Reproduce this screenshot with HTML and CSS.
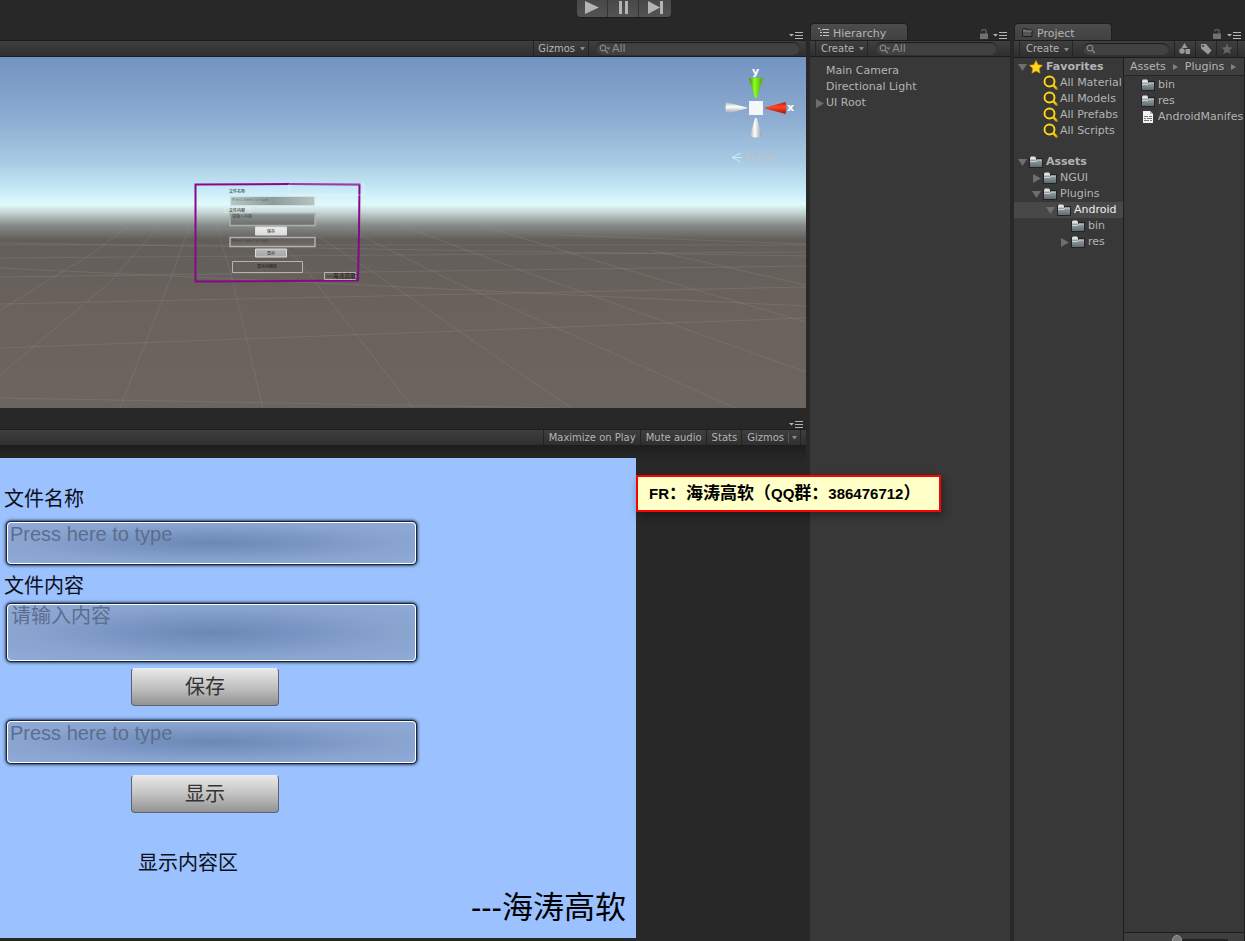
FILE: index.html
```html
<!DOCTYPE html>
<html lang="zh-CN">
<head>
<meta charset="utf-8">
<title>Unity Editor</title>
<link rel="stylesheet" href="styles.css">
</head>
<body>
<svg class="defs" aria-hidden="true">
  <defs>
    <linearGradient id="folderFill" x1="0" y1="0" x2="0" y2="1"><stop offset="0" stop-color="#9aa8a9"/><stop offset="1" stop-color="#5d6b6d"/></linearGradient>
    <symbol id="folder" viewBox="0 0 14 12"><path d="M0 1h6l1 1h7v10H0z" fill="#222"/><path d="M1 1.500 2 .5h4l1 1.500V4H1z" fill="#e2e2e2"/><path d="M1 3.500h12V11H1z" fill="url(#folderFill)"/><path d="M1 5.500h6l1-1.500h5" stroke="#c8d2d2" fill="none"/></symbol>
    <symbol id="magnifier" viewBox="0 0 15 16"><path d="m10 10 3.500 3.500" stroke="#c79900" stroke-width="2.600" stroke-linecap="round"/><circle cx="6.500" cy="6.500" r="5" fill="#3b3826" stroke="#ffd71c" stroke-width="1.900"/><path d="m10 10 3 3" stroke="#ffd71c" stroke-width="1.300"/></symbol>
    <symbol id="search" viewBox="0 0 14 10"><circle cx="4" cy="4" r="2.800" fill="none" stroke="#858585" stroke-width="1.200"/><path d="m6 6 3 3" stroke="#858585" stroke-width="1.500"/><path d="M7.500 3.500h4l-2 2.200z" fill="#858585"/></symbol>
    <symbol id="menu" viewBox="0 0 14 7"><path d="M0 2h5L2.500 4.500z" fill="#b5b5b5"/><path d="M6 .5h8M6 3.500h8M6 6.500h8" stroke="#b5b5b5"/></symbol>
    <symbol id="lock" viewBox="0 0 8 10"><path d="M0 4.500h8V10H0z" fill="#707070"/><path d="M2 2.500V.8h4V5" fill="none" stroke="#707070"/></symbol>
    <symbol id="down" viewBox="0 0 9 9"><path d="M0 1h9L4.500 8z" fill="#6e6e6e"/></symbol>
    <symbol id="right" viewBox="0 0 9 9"><path d="M1 0v9l8-4.500z" fill="#6e6e6e"/></symbol>
  </defs>
</svg>

<header class="playbar">
  <div class="play-group">
    <button class="play-button" aria-label="Play"><svg width="16" height="15" viewBox="0 0 16 15"><path d="M1 1v13l14-6.500z" fill="#b4b4b4"/></svg></button>
    <button class="play-button" aria-label="Pause"><svg width="16" height="15" viewBox="0 0 16 15"><path d="M4 1h3v13H4zM10 1h3v13h-3z" fill="#b4b4b4"/></svg></button>
    <button class="play-button" aria-label="Step"><svg width="16" height="15" viewBox="0 0 16 15"><path d="M1 1v13l12-6.500z M13 1h3v13h-3z" fill="#b4b4b4"/></svg></button>
  </div>
</header>

<main class="workspace">
  <div class="views">
    <section class="scene-panel">
      <div class="tabs"><svg class="menu"><use href="#menu"/></svg></div>
      <div class="toolbar toolbar-end">
        <button class="tool divided">Gizmos<i class="caret"></i></button>
        <label class="search scene-search"><svg><use href="#search"/></svg><input type="text" placeholder="All" aria-label="Search scene"></label>
      </div>
      <div class="scene">
        <svg class="scene-art" viewBox="0 57 806 351" preserveAspectRatio="xMinYMin slice">
          <defs>
            <linearGradient id="dark" x1="0" y1="0" x2="0" y2="1"><stop offset="0" stop-color="#8c9694"/><stop offset=".6" stop-color="#565351"/><stop offset="1" stop-color="#736d68"/></linearGradient>
            <linearGradient id="pale" x1="0" y1="0" x2="1" y2="0"><stop offset="0" stop-color="#b3cac9"/><stop offset=".5" stop-color="#8b9c9b"/><stop offset="1" stop-color="#b3c4c2"/></linearGradient>
            <linearGradient id="silver" x1="0" y1="0" x2="0" y2="1"><stop offset="0" stop-color="#eee"/><stop offset="1" stop-color="#a6a6a6"/></linearGradient>
          </defs>
          <g fill="none" stroke="#a39d98" stroke-opacity=".22">
            <path d="M0 245h806M0 258 806 252M0 277 806 266M0 304 806 287M0 348 806 318M0 398 560 408M0 268 806 306M0 243 806 256M560 235 806 244"/>
            <path d="M263 408 230 270 216 225M413 408 300 262 262 225M571 408 370 270 300 225M735 408 450 280 340 225M806 372 520 270 400 225M806 322 600 262 480 225M806 285 650 250M120 408 170 280 190 225M0 375 110 282 160 225M0 310 90 255 130 225"/>
          </g>
          <g fill="none" stroke="#8a078a" stroke-width="2"><path d="m195.500 184.500 95-.5 69 .5-.5 50-1 46-162.500 1z"/></g>
          <path d="M289 184h75v11h-75zM225 208h25v5h-25z" fill="none" stroke="#fff" stroke-opacity=".4"/>
          <g stroke="#d8dfde">
            <path d="M230.500 196.500h84v9h-84z" fill="url(#pale)"/>
            <path d="M230 213.500h85v12h-85zM230 237.500h85v9h-85z" fill="url(#dark)" stroke="#aeb0ae" stroke-width="1.500"/>
            <path d="M255.500 227h31v8h-31zM255.500 249h31v8h-31z" fill="url(#silver)"/>
            <path d="M232.500 261.500h70v11h-70zM324.500 272.500h31v7h-31z" fill="none" stroke="#b8b3ae"/>
          </g>
          <g class="tiny-text">
            <text x="229" y="193">文件名称</text><text x="229" y="212">文件内容</text>
            <text x="232" y="201" opacity=".4">Press here to type</text><text x="232" y="218" opacity=".6">请输入内容</text>
            <text x="232" y="242" opacity=".4">Press here to type</text>
            <text x="267" y="233">保存</text><text x="267" y="255">显示</text><text x="257" y="268">显示内容区</text>
            <text class="tiny-author" x="326" y="278">---海涛高软</text>
          </g>
        </svg>
        <svg class="gizmo" viewBox="720 65 80 102">
          <defs>
            <linearGradient id="g1"><stop offset="0" stop-color="#3d8e00"/><stop offset=".4" stop-color="#8dff25"/><stop offset="1" stop-color="#4ba300"/></linearGradient>
            <linearGradient id="g2" x1="0" y1="0" x2="0" y2="1"><stop offset="0" stop-color="#b91b08"/><stop offset=".4" stop-color="#ff4829"/><stop offset="1" stop-color="#a51402"/></linearGradient>
            <linearGradient id="g3"><stop offset="0" stop-color="#a8adb2"/><stop offset=".4" stop-color="#fff"/><stop offset="1" stop-color="#92989f"/></linearGradient>
            <linearGradient id="g4" x1="0" y1="0" x2="0" y2="1"><stop offset="0" stop-color="#a8adb2"/><stop offset=".4" stop-color="#fff"/><stop offset="1" stop-color="#92989f"/></linearGradient>
          </defs>
          <path d="M749 78.500q7-2 14 0L757 98h-2z" fill="url(#g1)"/>
          <path d="M750 136q6 3 12 0L757 118h-2z" fill="url(#g3)"/>
          <path d="M785.500 102q2 6 0 12L765 108.500v-1z" fill="url(#g2)"/>
          <path d="M726 102q-1 6 0 12l21-5.500v-1z" fill="url(#g4)"/>
          <path d="M749 101h14v14h-14z" fill="#f4f7fa"/>
          <text class="axis" x="752" y="75">y</text><text class="axis" x="787" y="111">x</text>
          <path d="m741 153-9 4.500 9 4.500M732 157.500h10" fill="none" stroke="#cdeaf6"/>
          <text class="persp" x="744" y="161">Persp</text>
        </svg>
      </div>
    </section>

    <section class="game-panel">
      <div class="tabs game-tabs"><svg class="menu"><use href="#menu"/></svg></div>
      <div class="toolbar toolbar-end game-toolbar">
        <button class="tool divided">Maximize on Play</button>
        <button class="tool divided">Mute audio</button>
        <button class="tool divided">Stats</button>
        <button class="tool divided gizmo-tool">Gizmos<span class="split"></span><i class="caret"></i></button>
      </div>
      <div class="game-area">
        <form class="game">
          <label class="game-label" for="name">文件名称</label>
          <input class="field" id="name" type="text" placeholder="Press here to type">
          <label class="game-label content-label" for="content">文件内容</label>
          <textarea class="field tall" id="content" placeholder="请输入内容"></textarea>
          <button class="game-button" type="button">保存</button>
          <input class="field second" type="text" placeholder="Press here to type" aria-label="显示文件">
          <button class="game-button lower" type="button">显示</button>
          <output class="result">显示内容区</output>
          <p class="author">---海涛高软</p>
        </form>
      </div>
    </section>
    <aside class="note"><span>FR</span>：海涛高软（<span>QQ</span>群：<span>386476712</span>）</aside>
  </div>

  <section class="panel">
    <div class="tabs">
      <h2 class="tab"><svg width="12" height="9" viewBox="0 0 12 9"><path d="M0 .5h2M4 1.500h7M5 4.500h6M5 7.500h6M2 2.500h1M2 4.500h2M2 7.500h2" stroke="#c4c4c4"/></svg>Hierarchy</h2>
      <svg class="lock"><use href="#lock"/></svg><svg class="menu"><use href="#menu"/></svg>
    </div>
    <div class="toolbar">
      <button class="tool create">Create<i class="caret"></i></button>
      <label class="search"><svg><use href="#search"/></svg><input type="text" placeholder="All" aria-label="Search hierarchy"></label>
    </div>
    <ul class="list hierarchy">
      <li>Main Camera</li>
      <li>Directional Light</li>
      <li><svg class="arrow"><use href="#right"/></svg>UI Root</li>
    </ul>
  </section>

  <section class="panel project">
    <div class="tabs">
      <h2 class="tab"><svg width="11" height="10" viewBox="0 0 11 10"><path d="M.5 2.500V1.500L1.500.5H4l1 1.500h5v6.500H.5z" fill="#555" stroke="#1c1c1c"/><path d="M1 3h9" stroke="#888"/></svg>Project</h2>
      <svg class="lock"><use href="#lock"/></svg><svg class="menu"><use href="#menu"/></svg>
    </div>
    <div class="toolbar">
      <button class="tool create">Create<i class="caret"></i></button>
      <label class="search"><svg viewBox="0 0 14 10"><circle cx="4" cy="4" r="2.800" fill="none" stroke="#858585" stroke-width="1.200"/><path d="m6 6 3 3" stroke="#858585" stroke-width="1.500"/></svg><input type="text" aria-label="Search project"></label>
      <button class="filter" aria-label="Filter by type"><svg width="12" height="12" viewBox="0 0 12 12"><path d="m5.500 0 3 5h-6z" fill="#999"/><circle cx="3" cy="8" r="2.700" fill="#999"/><path d="M6.500 6H11v5H6.500z" fill="#999"/></svg></button>
      <button class="filter" aria-label="Filter by label"><svg width="12" height="12" viewBox="0 0 12 12"><path d="M1 1h5l5.500 6.500L8 11.500 1 5.500z" fill="#999"/><circle cx="3" cy="3" r="1" fill="#333"/></svg></button>
      <button class="filter" aria-label="Favorite"><svg width="12" height="12" viewBox="0 0 12 12"><path d="m6 .5 1.600 3.700 4 .3-3 2.600 1 4L6 9l-3.600 2.100 1-4-3-2.600 4-.3z" fill="#666"/></svg></button>
    </div>
    <div class="browser">
      <ul class="list tree">
        <li class="root"><svg class="arrow"><use href="#down"/></svg><svg class="star" viewBox="0 0 14 14"><path d="m7 .5 2 4.300 4.500.5-3.300 3.100.9 4.800L7 10.900l-4.100 2.300.9-4.800L.5 5.300 5 4.800z" fill="#ffd51e" stroke="#d59b00" stroke-width=".6"/></svg>Favorites</li>
        <li class="query"><svg class="lens"><use href="#magnifier"/></svg>All Material</li>
        <li class="query"><svg class="lens"><use href="#magnifier"/></svg>All Models</li>
        <li class="query"><svg class="lens"><use href="#magnifier"/></svg>All Prefabs</li>
        <li class="query"><svg class="lens"><use href="#magnifier"/></svg>All Scripts</li>
        <li class="root assets"><svg class="arrow"><use href="#down"/></svg><svg class="folder"><use href="#folder"/></svg>Assets</li>
        <li class="level1"><svg class="arrow"><use href="#right"/></svg><svg class="folder"><use href="#folder"/></svg>NGUI</li>
        <li class="level1"><svg class="arrow"><use href="#down"/></svg><svg class="folder"><use href="#folder"/></svg>Plugins</li>
        <li class="level2 selected"><svg class="arrow"><use href="#down"/></svg><svg class="folder"><use href="#folder"/></svg>Android</li>
        <li class="level3"><svg class="arrow"></svg><svg class="folder"><use href="#folder"/></svg>bin</li>
        <li class="level3"><svg class="arrow"><use href="#right"/></svg><svg class="folder"><use href="#folder"/></svg>res</li>
      </ul>
      <div class="files">
        <nav class="crumbs"><a href="#assets">Assets</a><i></i><a href="#plugins">Plugins</a><i></i></nav>
        <ul class="list file-list">
          <li><svg class="folder"><use href="#folder"/></svg>bin</li>
          <li><svg class="folder"><use href="#folder"/></svg>res</li>
          <li><svg class="file" viewBox="0 0 14 14"><path d="M2 1h7l3 3v9H2z" fill="#f2f2f2"/><path d="M9 1v3h3" fill="#bbb"/><path d="M3 6.500h4M8 6.500h3M3 8.500h2M6 8.500h5M3 10.500h5M9 10.500h2" stroke="#777"/></svg>AndroidManifes</li>
        </ul>
        <div class="size-bar"><input type="range" value="0" aria-label="Icon size"></div>
      </div>
    </div>
  </section>
</main>
</body>
</html>
```
FILE: styles.css
```css
* { box-sizing: border-box; }
body {
  margin: 0;
  height: 100vh;
  display: flex;
  flex-direction: column;
  overflow: hidden;
  background: #282828;
  color: #b4b4b4;
  font: 11px/16px "DejaVu Sans", Verdana, sans-serif;
}
button, input, textarea { margin: 0; padding: 0; border: 0; background: none; color: inherit; font: inherit; outline: 0; }
ul, h2, p { margin: 0; padding: 0; list-style: none; font: inherit; }
svg { flex: none; display: block; }
.defs { position: absolute; width: 0; height: 0; }

.playbar { flex: none; height: 22px; display: flex; justify-content: center; }
.play-group { display: flex; height: 17px; border-radius: 0 0 4px 4px; overflow: hidden; background: linear-gradient(#484848, #535353); box-shadow: 0 1px #1c1c1c; margin-left: 2px; }
.play-button { width: 31px; display: flex; justify-content: center; border-right: 1px solid #333; }
.play-button:last-child { border: 0; width: 32px; }

.workspace { flex: 1; min-height: 0; display: grid; grid-template-columns: minmax(0, 1fr) 200px 231px; gap: 4px; }
.views { position: relative; display: flex; flex-direction: column; min-height: 0; }
.scene-panel { flex: 386; min-height: 0; display: flex; flex-direction: column; }
.game-panel { flex: 533; min-height: 0; display: flex; flex-direction: column; }

.tabs { flex: none; height: 18px; display: flex; align-items: flex-end; justify-content: flex-end; padding-right: 3px; }
.tabs.game-tabs { height: 21px; }
.tab { margin-right: auto; width: 98px; height: 17px; display: flex; align-items: center; gap: 3px; padding: 4px 7px 0; border: 1px solid #1f1f1f; border-bottom: 0; border-radius: 4px 4px 0 0; background: linear-gradient(#4c4c4c, #414141); }
.tab svg { margin-bottom: 3px; }
.project .tab { gap: 4px; }
.menu { width: 14px; height: 7px; margin-bottom: 1px; }
.lock { width: 8px; height: 10px; margin: 0 5px 1px 0; }
.project .tabs { padding-right: 4px; }
.project .lock { margin-right: 6px; }

.toolbar { flex: none; height: 17px; display: flex; background: linear-gradient(#3f3f3f, #2f2f2f); border-top: 1px solid #1d1d1d; border-bottom: 1px solid #1d1d1d; font-size: 10px; line-height: 14px; }
.toolbar-end { justify-content: flex-end; }
.tool { display: flex; align-items: center; white-space: nowrap; padding: 0 4px; }
.divided { border-left: 1px solid #232323; }
.caret { width: 5px; border: solid transparent; border-width: 3px 2px 0; border-top-color: #8a8a8a; margin-left: 5px; }
.create { margin-left: 5px; padding: 0 3px 0 5px; border: solid #262626; border-width: 0 1px; }
.search { flex: 1; min-width: 0; margin: 1px 13px 1px 8px; padding-left: 3px; display: flex; align-items: center; border-radius: 7px; background: #414141; box-shadow: inset 0 1px 1px #1d1d1d; color: #858585; }
.search svg { width: 14px; height: 10px; }
.search input { flex: 1; min-width: 0; font-size: 11px; line-height: 12px; height: 12px; }
.search input::placeholder { color: #8d8d8d; opacity: 1; }
.scene-search { flex: none; width: 204px; margin: 1px 6px 1px 7px; }
.search svg { margin-right: -1px; }
.scene-panel .divided { border-right: 1px solid #232323; padding-right: 3px; }

.scene { position: relative; flex: 1; min-height: 0; background: linear-gradient(#7393c2 0%, #8babd0 17%, #a8cbe3 30%, #c7ebf8 38%, #e1fafb 42%, #c9d9d9 44%, #858b89 48%, #625e5b 52%, #6a625c 72%, #6c645e 100%); }
.scene-art { position: absolute; inset: 0; width: 100%; height: 100%; }
.gizmo { position: absolute; top: 8px; right: 6px; width: 80px; height: 102px; }
.tiny-text { font: 4px "DejaVu Sans", "Noto Sans CJK SC", sans-serif; fill: #111; }
.tiny-author { font-size: 6px; }
.axis { font-weight: bold; font-size: 11px; fill: #fff; }
.persp { font-size: 11px; fill: #c3c2c6; }

.game-toolbar { padding-right: 5px; }
.game-toolbar .tool { padding: 0 4px 0 5px; }
.game-toolbar .gizmo-tool { padding: 0 3px 0 5px; border-right: 1px solid #232323; }
.split { width: 1px; height: 10px; margin-left: 4px; background: #555; }
.split + .caret { margin-left: 3px; }
.game-area { flex: 1; min-height: 0; padding: 12px 0 3px; display: flex; background: linear-gradient(#1e1e1e, #282828 16px); }
.game { width: 78.9%; padding: 27px 6px 8px; display: flex; flex-direction: column; align-items: flex-start; background: #9bc1ff; color: #0b0f17; font: 20px/28px "Liberation Sans", "Noto Sans CJK SC", sans-serif; }
.game-label { height: 28px; margin: 0 0 9px -2px; }
.content-label { margin: 8px 0 4px -2px; }
.field { width: 409px; max-width: 100%; height: 42px; margin-left: 1px; padding: 0 2px 18px; border: 1px solid #fff; border-radius: 4px; background: radial-gradient(ellipse at center, #6b87b3 0%, #7894c2 30%, #8aa4d0 65%, #90aad9 100%); box-shadow: 0 0 1px 1px #17202e, 0 0 3px 2px #3c4f70; line-height: 22px; resize: none; overflow: hidden; }
.field::placeholder { color: #5b6e8d; opacity: 1; }
.tall { height: 57px; padding: 0 3px; }
.game-button { width: 148px; height: 38px; margin: 7px 0 0 125px; border: 1px solid #5b6472; border-top-color: #e9edf2; border-radius: 4px; background: linear-gradient(#e8e8e8, #bebebe 55%, #929292); color: #333; }
.second { margin-top: 15px; }
.lower { margin-top: 12px; }
.result { margin: 36px 0 0 132px; }
.author { margin-top: auto; align-self: flex-end; padding-right: 4px; font-size: 31px; line-height: 44px; color: #000; }

.note { position: absolute; left: 636px; top: 453px; z-index: 2; width: 305px; height: 37px; padding: 4px 11px; border: 2px solid #f00; background: #ffffc8; color: #000; box-shadow: 2px 4px 8px #0005; font: bold 17px/22px "Noto Sans CJK SC", sans-serif; white-space: nowrap; }
.note span { font: bold 15px/22px "Liberation Sans", sans-serif; }

.panel { min-width: 0; min-height: 0; display: flex; flex-direction: column; background: linear-gradient(#282828 18px, #383838 18px); }
.list li { height: 16px; display: flex; align-items: center; white-space: nowrap; }
.hierarchy { padding: 6px 0 0 16px; }
.hierarchy .arrow { margin: 0 2px 0 -11px; }
.arrow { width: 9px; height: 9px; margin-right: 2px; }
.folder { width: 14px; height: 12px; margin-right: 3px; }
.file { width: 14px; height: 14px; margin-right: 3px; }
.star { width: 14px; height: 14px; margin-right: 3px; }
.lens { width: 15px; height: 16px; margin-right: 2px; }

.project .toolbar { height: 18px; }
.project .create { padding-left: 6px; }
.project .toolbar .search { margin: 2px 5px 2px 10px; }
.filter { flex: none; width: 21px; display: flex; align-items: center; justify-content: center; border-left: 1px solid #242424; }
.filter:last-child { width: 22px; margin-right: 7px; border-right: 1px solid #242424; }
.browser { flex: 1; min-height: 0; display: grid; grid-template-columns: 110px minmax(0, 1fr); }
.tree { padding-top: 1px; overflow: hidden; border-right: 1px solid #1e1e1e; }
.root { padding-left: 4px; font-weight: bold; }
.assets { margin-top: 15px; }
.query { padding-left: 29px; }
.level1 { padding-left: 18px; }
.level2 { padding-left: 32px; }
.level3 { padding-left: 46px; }
.selected { background: #484848; color: #eee; }
.files { display: flex; flex-direction: column; min-height: 0; overflow: hidden; border-right: 1px solid #1e1e1e; }
.crumbs { flex: none; height: 18px; padding-left: 6px; display: flex; align-items: center; overflow: hidden; background: #3e3e3e; border-bottom: 1px solid #242424; }
.crumbs a { color: inherit; text-decoration: none; }
.crumbs i { flex: none; margin: 0 7px; border: solid transparent; border-width: 3px 0 3px 5px; border-left-color: #808080; }
.file-list { flex: 1; padding: 1px 0 0 17px; }
.size-bar { flex: none; height: 9px; padding: 2px 16px 0; display: flex; justify-content: flex-end; align-items: flex-start; overflow: hidden; border-top: 1px solid #1b1b1b; background: #3e3e3e; }
.size-bar input { appearance: none; width: 56px; height: 10px; background: linear-gradient(#0000 4px, #222 4px, #222 6px, #0000 6px); }
.size-bar input::-webkit-slider-thumb { appearance: none; width: 10px; height: 10px; border-radius: 50%; background: #777; border: 1px solid #999; }
```
